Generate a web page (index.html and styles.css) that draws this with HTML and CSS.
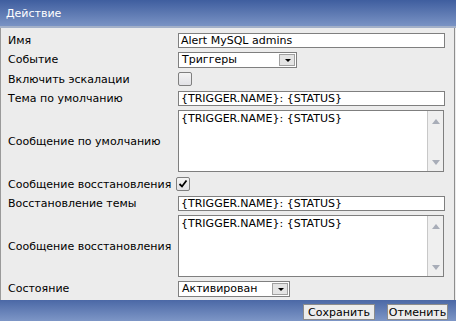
FILE: index.html
```html
<!DOCTYPE html>
<html>
  <head>
    <title>Действие</title>
    <link rel="stylesheet" href="styles.css">
  </head>
  <body>
    <div class="dialog">
      <div class="title">Действие</div>
      <div class="form">
        <div class="row r-input">
          <div class="label">Имя</div>
          <div class="field"><div class="input wide">Alert MySQL admins</div></div>
        </div>
        <div class="row r-input">
          <div class="label">Событие</div>
          <div class="field">
            <div class="select s-event"><span>Триггеры</span><b class="arrow"></b></div>
          </div>
        </div>
        <div class="row r-check">
          <div class="label">Включить эскалации</div>
          <div class="field"><div class="check"></div></div>
        </div>
        <div class="row r-input">
          <div class="label">Тема по умолчанию</div>
          <div class="field"><div class="input wide">{TRIGGER.NAME}: {STATUS}</div></div>
        </div>
        <div class="row r-area">
          <div class="label">Сообщение по умолчанию</div>
          <div class="field">
            <div class="area">
              <div class="area-text">{TRIGGER.NAME}: {STATUS}</div>
              <div class="scroll"><i class="up"></i><i class="down"></i></div>
            </div>
          </div>
        </div>
        <div class="row r-check2">
          <div class="label">Сообщение восстановления</div>
          <div class="field tight">
            <div class="check checked">
              <svg width="10" height="10" viewBox="0 0 10 10"><path d="M1.5 5 L4 7.5 L8.5 1.5" fill="none" stroke="#000" stroke-width="1.8"/></svg>
            </div>
          </div>
        </div>
        <div class="row r-input">
          <div class="label">Восстановление темы</div>
          <div class="field"><div class="input wide">{TRIGGER.NAME}: {STATUS}</div></div>
        </div>
        <div class="row r-area">
          <div class="label">Сообщение восстановления</div>
          <div class="field">
            <div class="area">
              <div class="area-text">{TRIGGER.NAME}: {STATUS}</div>
              <div class="scroll"><i class="up"></i><i class="down"></i></div>
            </div>
          </div>
        </div>
        <div class="row r-input">
          <div class="label">Состояние</div>
          <div class="field">
            <div class="select s-state"><span>Активирован</span><b class="arrow"></b></div>
          </div>
        </div>
      </div>
      <div class="footer">
        <button class="btn b-save">Сохранить</button>
        <button class="btn b-cancel">Отменить</button>
      </div>
    </div>
  </body>
</html>
```

FILE: styles.css
```css
html {
  background: #ececec;
}
body {
  margin: 0;
  width: 456px;
  height: 321px;
  overflow: hidden;
  font-family: "DejaVu Sans", Verdana, sans-serif;
  font-size: 11px;
  color: #000;
}

.dialog {
  display: flex;
  flex-direction: column;
  height: 321px;
}

.title {
  height: 26px;
  line-height: 28px;
  padding-left: 6px;
  color: #fff;
  background: linear-gradient(#3f5e9f, #7a93c4);
  border-bottom: 2px solid #a3b0c8;
}

.form {
  flex: 1;
  display: flex;
  flex-direction: column;
  padding: 3px 0 0 7px;
  border-left: 1px solid #9a9a9a;
  border-right: 1px solid #8e8e8e;
  margin-right: 1px;
  background: #ececec;
}

.row {
  display: flex;
  align-items: center;
}
.r-input {
  height: 19px;
}
.r-check {
  height: 20px;
}
.r-area {
  height: 66px;
}
.r-check2 {
  height: 20px;
}

.label {
  width: 170px;
  flex: none;
  white-space: nowrap;
}

.field {
  flex: 1;
  display: flex;
  align-items: center;
}
.field.tight {
  margin-left: -2px;
}

.input {
  height: 13px;
  line-height: 13px;
  padding: 0 2px;
  background: #fff;
  border: 1px solid #7f7f7f;
  white-space: nowrap;
  overflow: hidden;
}
.input.wide {
  width: 261px;
}

.select {
  position: relative;
  height: 14px;
  line-height: 14px;
  padding-left: 3px;
  background: #fff;
  border: 1px solid #7f7f7f;
}
.s-event {
  width: 114px;
}
.s-state {
  width: 107px;
}
.select .arrow {
  position: absolute;
  right: 1px;
  top: 1px;
  width: 16px;
  height: 12px;
  background: #e4e4e4;
  border: 1px solid #a0a0a0;
  box-sizing: border-box;
}
.select .arrow::after {
  content: "";
  position: absolute;
  left: 5px;
  top: 4px;
  border-left: 3px solid transparent;
  border-right: 3px solid transparent;
  border-top: 3px solid #000;
}

.check {
  width: 12px;
  height: 12px;
  border: 1px solid #7f7f7f;
  border-radius: 2px;
  background: linear-gradient(#f4f4f4, #e2e2e6);
  display: flex;
  align-items: center;
  justify-content: center;
}

.area {
  display: flex;
  width: 264px;
  height: 60px;
  background: #fff;
  border: 1px solid #7f7f7f;
}
.area-text {
  flex: 1;
  padding: 1px 2px;
  white-space: nowrap;
}
.scroll {
  width: 15px;
  background: #efefef;
  border-left: 1px solid #c8c8c8;
  display: flex;
  flex-direction: column;
  justify-content: space-between;
  align-items: center;
  padding: 8px 0 6px;
}
.scroll i {
  width: 0;
  height: 0;
  border-left: 4px solid transparent;
  border-right: 4px solid transparent;
}
.scroll .up {
  border-bottom: 5px solid #a8adb8;
}
.scroll .down {
  border-top: 5px solid #a8adb8;
}

.footer {
  height: 21px;
  display: flex;
  justify-content: flex-end;
  align-items: center;
  gap: 12px;
  padding: 0 8px 0 0;
  background: linear-gradient(#4b68a6, #7d96c6);
}
.btn {
  height: 16px;
  margin-top: 3px;
  padding: 0;
  font-family: "DejaVu Sans", Verdana, sans-serif;
  font-size: 11px;
  line-height: 13px;
  color: #000;
  background: #ececec;
  border: 1px solid #8c8c8c;
  border-radius: 0;
}
.b-save {
  width: 72px;
}
.b-cancel {
  width: 61px;
}
```
